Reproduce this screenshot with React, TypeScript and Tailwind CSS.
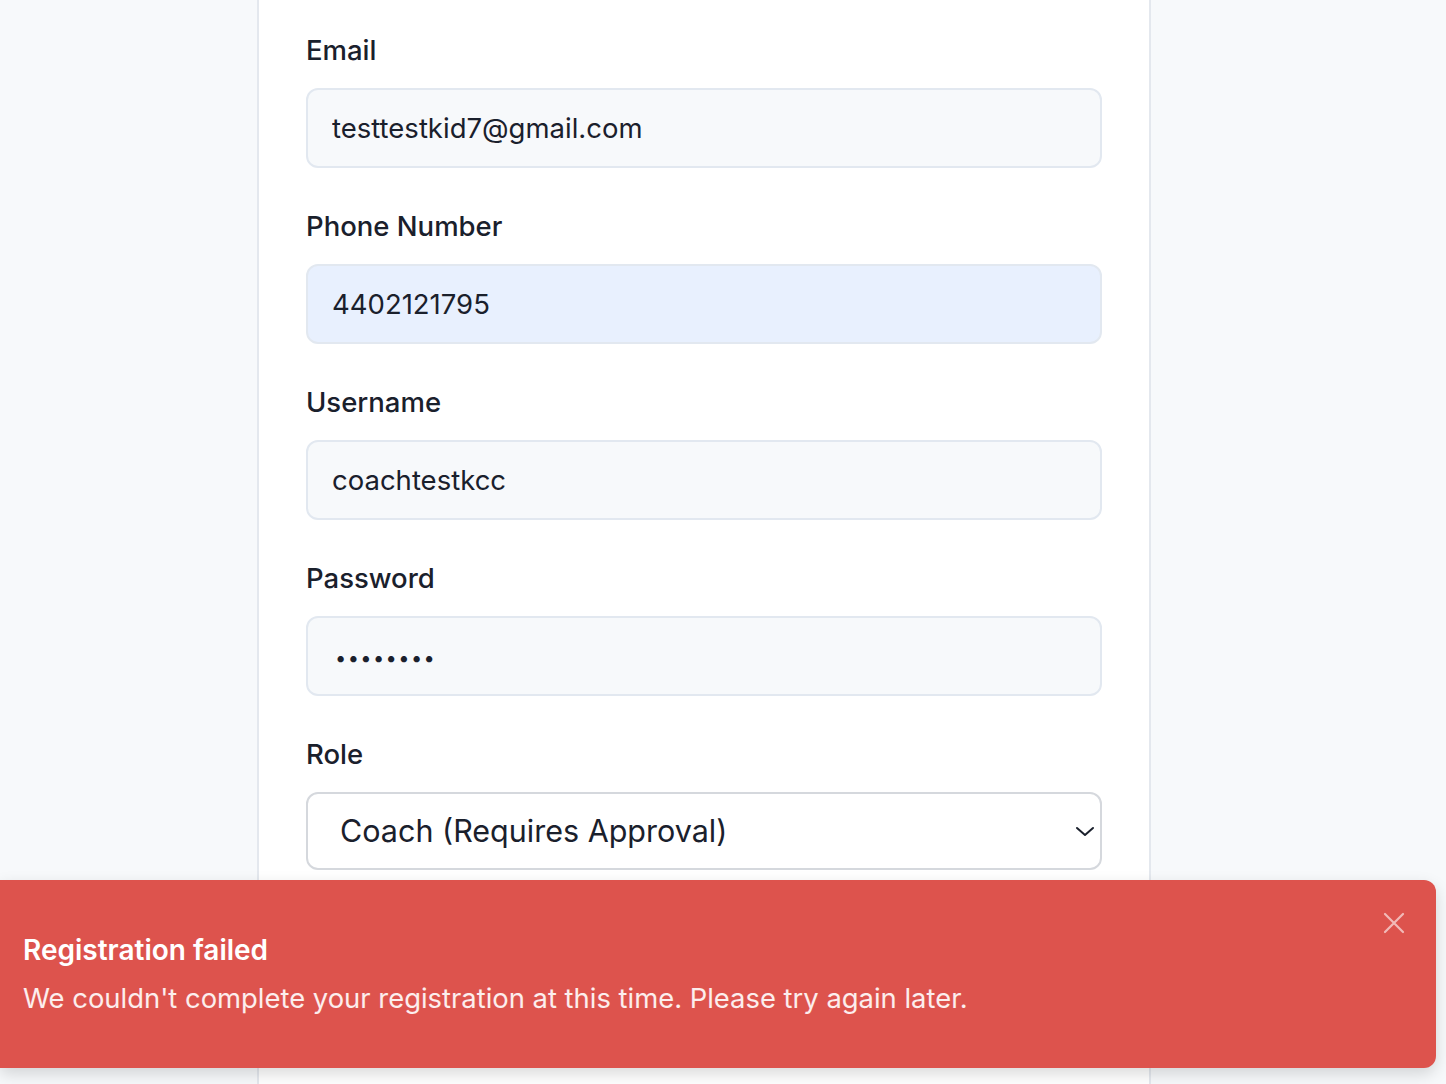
import React from 'react';

const fields = [
  { label: 'Email', value: 'testtestkid7@gmail.com', type: 'text', bg: 'bg-[#f7f9fb]' },
  { label: 'Phone Number', value: '4402121795', type: 'text', bg: 'bg-[#e8f0fe]' },
  { label: 'Username', value: 'coachtestkcc', type: 'text', bg: 'bg-[#f7f9fb]' },
];

const App = () => {
  return (
    <div className="relative h-[1084px] overflow-hidden bg-[#f7f9fb] font-['Inter',sans-serif] text-[#1a202c]">
      <div className="ml-[257px] w-[894px] h-full bg-white border-x-2 border-[#e4e8ee] px-[47px] pt-[34px]">
        <div className="flex flex-col gap-[42px]">
          {fields.map((f) => (
            <div key={f.label} className="flex flex-col">
              <label className="text-[27.5px] leading-8 font-medium mb-[22px]">{f.label}</label>
              <input
                type={f.type}
                readOnly
                value={f.value}
                className={`h-20 w-full rounded-xl border-2 border-[#e2e8f0] ${f.bg} px-[24px] text-[27.5px] text-[#1a202c] outline-none`}
              />
            </div>
          ))}
          <div className="flex flex-col">
            <label className="text-[27.5px] leading-8 font-medium mb-[22px]">Password</label>
            <input
              type="password"
              readOnly
              value="password"
              className="h-20 w-full rounded-xl border-2 border-[#e2e8f0] bg-[#f7f9fb] px-[27px] pt-[3px] text-[20px] tracking-[1.4px] text-[#1a202c] outline-none"
            />
          </div>
          <div className="flex flex-col">
            <label className="text-[27.5px] leading-8 font-medium mb-[22px]">Role</label>
            <div className="flex h-[78px] w-full items-center justify-between rounded-xl border-2 border-[#d5d8dd] bg-white pl-[32px] pr-[5px] text-[30.5px]">
              <span>Coach (Requires Approval)</span>
              <svg width="20" height="14" viewBox="0 0 20 14" fill="none">
                <path d="M2 4l8 7 8-7" stroke="#1a202c" strokeWidth="2" strokeLinecap="round" strokeLinejoin="round" />
              </svg>
            </div>
          </div>
        </div>
      </div>

      <div className="absolute left-0 top-[880px] w-[1436px] h-[188px] rounded-r-xl bg-[#dd534d] shadow-[0_6px_16px_rgba(0,0,0,0.15)] text-white">
        <div className="pl-[23px] pt-[50px]">
          <div className="text-[28px] font-semibold leading-10">Registration failed</div>
          <div className="mt-[8px] text-[27.4px] leading-10 text-white/90">We couldn't complete your registration at this time. Please try again later.</div>
        </div>
        <button className="absolute right-[31px] top-[32px] text-white/60">
          <svg width="22" height="22" viewBox="0 0 22 22" fill="none">
            <path d="M2 2l18 18M20 2L2 20" stroke="currentColor" strokeWidth="2.2" strokeLinecap="round" />
          </svg>
        </button>
      </div>
    </div>
  );
};

export default App;
